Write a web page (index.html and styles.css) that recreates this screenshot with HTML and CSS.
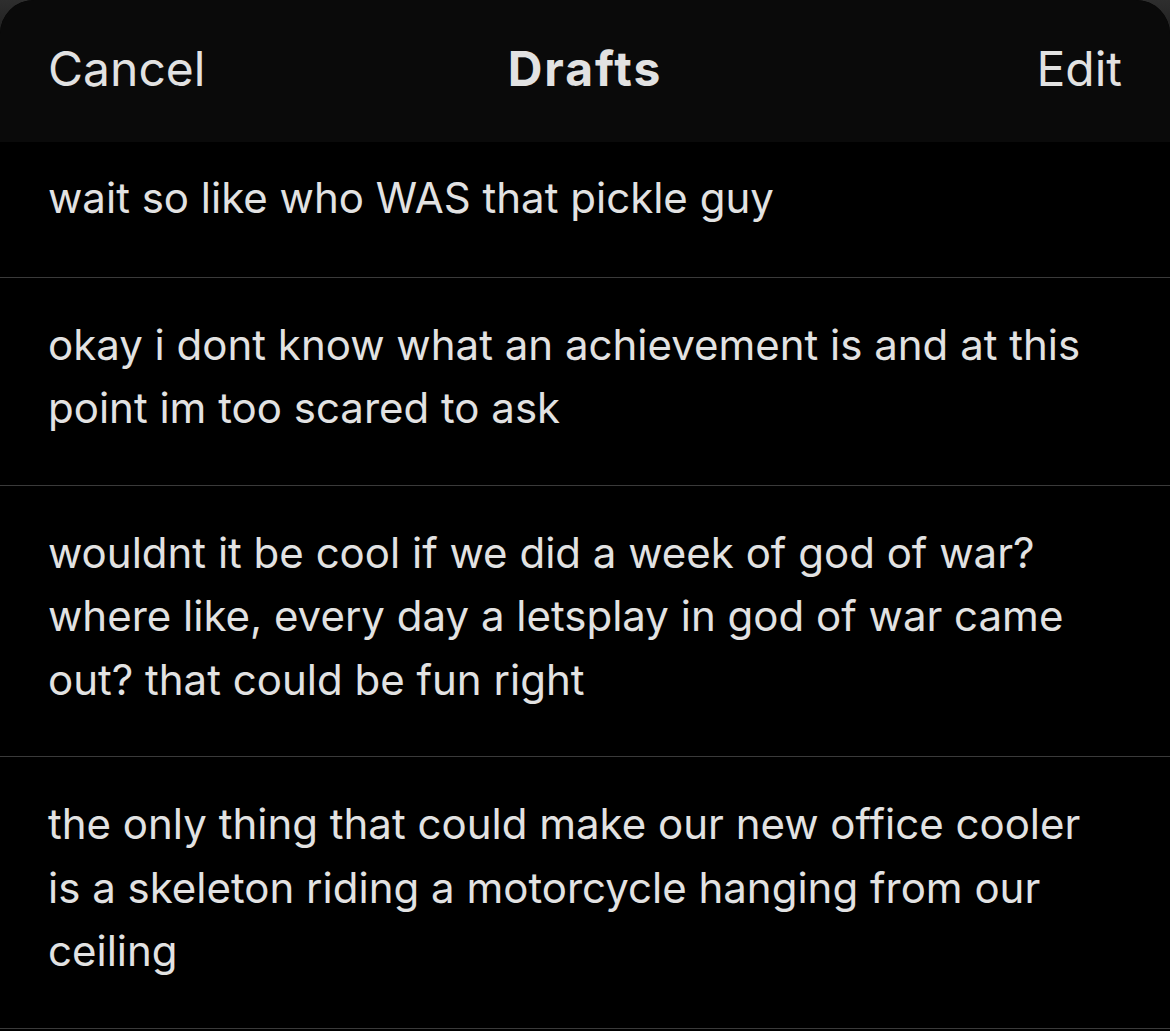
FILE: index.html
```html
<!DOCTYPE html>
<html lang="en">

<head>
    <meta charset="UTF-8">
    <meta name="viewport" content="width=device-width, initial-scale=1.0">
    <title>Drafts</title>
    <link rel="stylesheet" href="styles.css">
</head>

<body>
    <div class="sheet">
        <header class="nav">
            <span class="nav-btn">Cancel</span>
            <h1 class="nav-title">Drafts</h1>
            <span class="nav-btn nav-right">Edit</span>
        </header>

        <ul class="drafts">
            <li class="draft">wait so like who WAS that pickle guy</li>
            <li class="draft">okay i dont know what an achievement is and at this point im too scared to ask</li>
            <li class="draft">wouldnt it be cool if we did a week of god of war? where like, every day a letsplay in god of war came out? that could be fun right</li>
            <li class="draft">the only thing that could make our new office cooler is a skeleton riding a motorcycle hanging from our ceiling</li>
        </ul>
    </div>
</body>

</html>
```

FILE: styles.css
```css
body {
    margin: 0;
    padding: 0;
    background: linear-gradient(#2e2e2e, #151515 60px);
    font-family: Inter, "Noto Sans", sans-serif;
    color: #e2e2e2;
}

.sheet {
    min-height: 100vh;
    background-color: #000;
    border-radius: 34px 34px 0 0;
    overflow: hidden;
}

.nav {
    display: grid;
    grid-template-columns: 1fr auto 1fr;
    align-items: center;
    height: 142px;
    padding: 0 48px 6px;
    box-sizing: border-box;
    background-color: #0a0a0a;
}

.nav-btn {
    font-size: 48px;
    font-weight: 400;
}

.nav-right {
    text-align: right;
}

.nav-title {
    margin: 0;
    font-size: 48px;
    font-weight: 700;
    letter-spacing: 2px;
}

.drafts {
    list-style: none;
    margin: 0;
    padding: 0;
}

.draft {
    padding: 35px 48px 45px 48px;
    font-size: 42px;
    line-height: 63.5px;
    border-bottom: 1px solid #3a3a3a;
}

.draft:first-child {
    padding-top: 24px;
    padding-bottom: 47px;
}
```
